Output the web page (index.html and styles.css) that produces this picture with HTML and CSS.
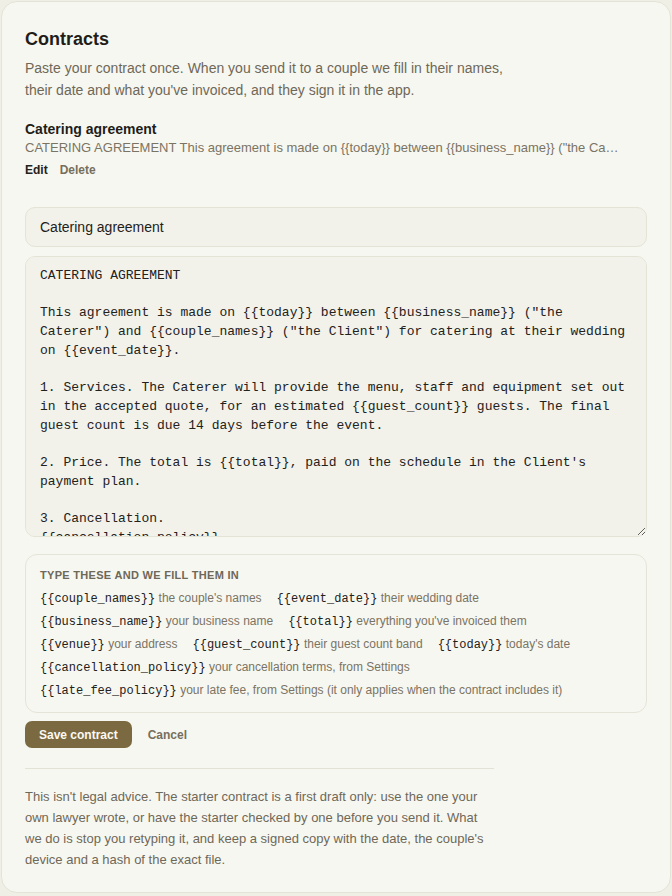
FILE: index.html
```html
<!DOCTYPE html>
<html lang="en">
<head>
<meta charset="utf-8">
<title>Contracts</title>
<link rel="stylesheet" href="styles.css">
</head>
<body>
<main class="card">
  <h1 class="title">Contracts</h1>
  <p class="lead">Paste your contract once. When you send it to a couple we fill in their names, their date and what you've invoiced, and they sign it in the app.</p>

  <section class="saved">
    <div class="saved-name">Catering agreement</div>
    <div class="saved-preview">CATERING AGREEMENT This agreement is made on {{today}} between {{business_name}} ("the Caterer") and {{couple_names}} ("the Client") for catering at their wedding</div>
    <div class="saved-actions">
      <button class="link link-dark" type="button">Edit</button>
      <button class="link" type="button">Delete</button>
    </div>
  </section>

  <form class="editor">
    <input class="field" type="text" value="Catering agreement">
    <textarea class="field body">CATERING AGREEMENT

This agreement is made on {{today}} between {{business_name}} ("the Caterer") and {{couple_names}} ("the Client") for catering at their wedding on {{event_date}}.

1. Services. The Caterer will provide the menu, staff and equipment set out in the accepted quote, for an estimated {{guest_count}} guests. The final guest count is due 14 days before the event.

2. Price. The total is {{total}}, paid on the schedule in the Client's payment plan.

3. Cancellation.
{{cancellation_policy}}

4. Late payment.
{{late_fee_policy}}</textarea>

    <div class="hints">
      <div class="hints-title">Type these and we fill them in</div>
      <ul class="hint-list">
        <li><code>{{couple_names}}</code> the couple's names</li>
        <li><code>{{event_date}}</code> their wedding date</li>
        <li><code>{{business_name}}</code> your business name</li>
        <li><code>{{total}}</code> everything you've invoiced them</li>
        <li><code>{{venue}}</code> your address</li>
        <li><code>{{guest_count}}</code> their guest count band</li>
        <li><code>{{today}}</code> today's date</li>
        <li><code>{{cancellation_policy}}</code> your cancellation terms, from Settings</li>
        <li><code>{{late_fee_policy}}</code> your late fee, from Settings (it only applies when the contract includes it)</li>
      </ul>
    </div>

    <div class="form-actions">
      <button class="btn-primary" type="button">Save contract</button>
      <button class="link" type="button">Cancel</button>
    </div>
  </form>

  <hr class="divider">
  <p class="note">This isn't legal advice. The starter contract is a first draft only: use the one your own lawyer wrote, or have the starter checked by one before you send it. What we do is stop you retyping it, and keep a signed copy with the date, the couple's device and a hash of the exact file.</p>
</main>
</body>
</html>
```

FILE: styles.css
```css
* { box-sizing: border-box; }

html, body {
  margin: 0;
  padding: 0;
  background: #efefe6;
}

body {
  font-family: "Liberation Sans", Arial, sans-serif;
  color: #23211b;
  padding: 1px;
}

.card {
  background: #f7f7f1;
  border: 1px solid #e3e3d7;
  border-radius: 16px;
  padding: 23px 23px 22px;
}

.title {
  margin: 0;
  font-size: 18px;
  line-height: 28px;
  font-weight: 700;
  color: #1f1d18;
}

.lead {
  margin: 4px 0 0;
  max-width: 36em;
  font-size: 14px;
  line-height: 22px;
  color: #6e6858;
}

.saved {
  margin-top: 18px;
}

.saved-name {
  font-size: 14px;
  line-height: 20px;
  font-weight: 700;
  color: #1f1d18;
}

.saved-preview {
  font-size: 13px;
  line-height: 18px;
  color: #7a7464;
  max-width: 596px;
  white-space: nowrap;
  overflow: hidden;
  text-overflow: ellipsis;
}

.saved-actions {
  margin-top: 4px;
  display: flex;
  gap: 12px;
}

.link {
  border: 0;
  background: none;
  padding: 0;
  font-family: inherit;
  font-size: 12px;
  line-height: 18px;
  font-weight: 700;
  color: #766f5e;
  cursor: pointer;
}

.link-dark {
  color: #24221c;
}

.editor {
  margin: 28px 0 0;
  display: flex;
  flex-direction: column;
}

.field {
  display: block;
  width: 100%;
  border: 1px solid #e3e3d6;
  border-radius: 10px;
  background: #f2f2ea;
  color: #23211b;
  font-family: "Liberation Sans", Arial, sans-serif;
  font-size: 14px;
  padding: 0 14px;
  height: 40px;
  outline: none;
}

.body {
  margin-top: 9px;
  height: 281px;
  padding: 10px 14px 8px;
  font-family: "Liberation Mono", "DejaVu Sans Mono", monospace;
  font-size: 13px;
  line-height: 18.7px;
  resize: vertical;
}

.hints {
  margin-top: 17px;
  border: 1px solid #e4e4d8;
  border-radius: 12px;
  padding: 12px 14px 13px;
}

.hints-title {
  font-size: 11px;
  line-height: 16px;
  font-weight: 700;
  text-transform: uppercase;
  letter-spacing: 0.3px;
  color: #6e6858;
}

.hint-list {
  list-style: none;
  margin: 6px 0 0;
  padding: 0;
  display: flex;
  flex-wrap: wrap;
  column-gap: 15px;
  row-gap: 5px;
}

.hint-list li {
  height: 18px;
  font-size: 12px;
  line-height: 18px;
  color: #7a7464;
}

.hint-list code {
  font-family: "Liberation Mono", "DejaVu Sans Mono", monospace;
  font-size: 12px;
  line-height: 12px;
  color: #23211b;
}

.form-actions {
  margin-top: 8px;
  display: flex;
  align-items: center;
  gap: 16px;
}

.btn-primary {
  border: 0;
  border-radius: 7px;
  background: #7b6a41;
  color: #fbf9f2;
  font-family: inherit;
  font-size: 12px;
  font-weight: 700;
  height: 27px;
  padding: 0 14px;
  cursor: pointer;
}

.divider {
  margin: 20px 0 0;
  max-width: 469px;
  border: 0;
  border-top: 1px solid #e2e2d6;
}

.note {
  margin: 17px 0 0;
  max-width: 469px;
  font-size: 13px;
  line-height: 21px;
  color: #6e6858;
}
```
